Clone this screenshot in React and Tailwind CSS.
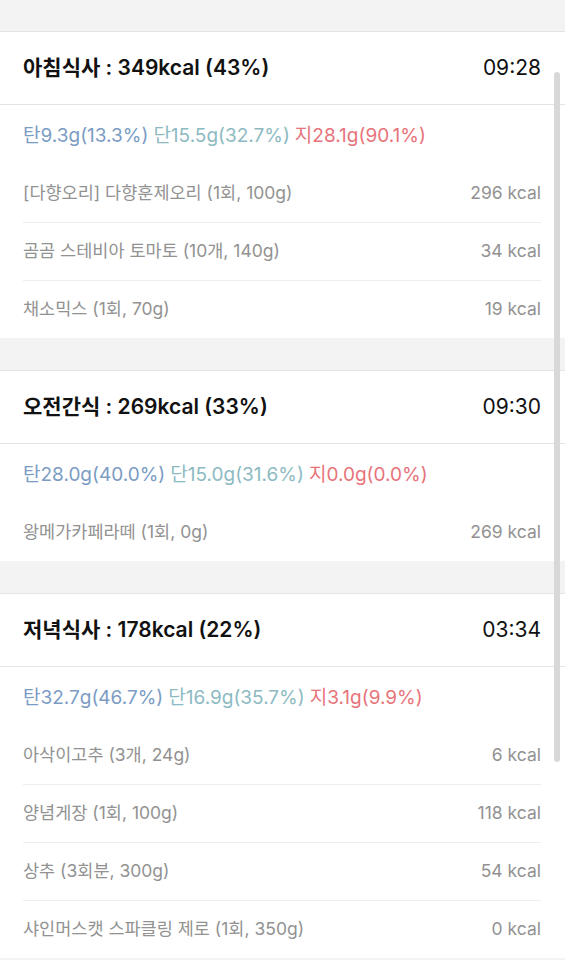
const meals = [
  {
    title: '아침식사 : 349kcal (43%)',
    time: '09:28',
    carb: '탄9.3g(13.3%)',
    protein: '단15.5g(32.7%)',
    fat: '지28.1g(90.1%)',
    items: [
      { name: '[다향오리] 다향훈제오리 (1회, 100g)', kcal: '296 kcal' },
      { name: '곰곰 스테비아 토마토 (10개, 140g)', kcal: '34 kcal' },
      { name: '채소믹스 (1회, 70g)', kcal: '19 kcal' },
    ],
  },
  {
    title: '오전간식 : 269kcal (33%)',
    time: '09:30',
    carb: '탄28.0g(40.0%)',
    protein: '단15.0g(31.6%)',
    fat: '지0.0g(0.0%)',
    items: [{ name: '왕메가카페라떼 (1회, 0g)', kcal: '269 kcal' }],
  },
  {
    title: '저녁식사 : 178kcal (22%)',
    time: '03:34',
    carb: '탄32.7g(46.7%)',
    protein: '단16.9g(35.7%)',
    fat: '지3.1g(9.9%)',
    items: [
      { name: '아삭이고추 (3개, 24g)', kcal: '6 kcal' },
      { name: '양념게장 (1회, 100g)', kcal: '118 kcal' },
      { name: '상추 (3회분, 300g)', kcal: '54 kcal' },
      { name: '샤인머스캣 스파클링 제로 (1회, 350g)', kcal: '0 kcal' },
    ],
  },
];

const MealSection = ({ meal }) => (
  <section className="bg-white">
    {/* Header */}
    <div className="h-[74px] border-y border-[#e4e4e4] flex items-center justify-between pl-[23px] pr-6">
      <h3 className="text-[21px] font-semibold text-[#111]">{meal.title}</h3>
      <span className="text-[21px] text-[#111]">{meal.time}</span>
    </div>

    {/* Macros */}
    <div className="h-[60px] flex items-center pt-[3px] pl-[23px] pr-6 text-[19px]">
      <span className="text-[#7b9cc4]">{meal.carb}</span>
      <span className="text-[#8dbac2] ml-[5px]">{meal.protein}</span>
      <span className="text-[#e7737b] ml-[5px]">{meal.fat}</span>
    </div>

    {/* Foods */}
    <ul className="pl-[23px] pr-6">
      {meal.items.map((item, i) => (
        <li
          key={item.name}
          className={`h-[57px] flex items-center justify-between text-[17.5px] text-[#929292] ${
            i < meal.items.length - 1 ? 'box-content border-b border-[#ededed]' : ''
          }`}
        >
          <span>{item.name}</span>
          <span>{item.kcal}</span>
        </li>
      ))}
    </ul>
  </section>
);

const App = () => {
  return (
    <div
      className="relative min-h-screen bg-[#f3f3f3] pt-[31px] space-y-8 overflow-hidden"
      style={{ fontFamily: 'Inter, "Noto Sans CJK KR", sans-serif' }}
    >
      {meals.map((meal) => (
        <MealSection key={meal.title} meal={meal} />
      ))}

      {/* scroll indicator */}
      <div className="absolute right-[5px] top-[72px] w-[6px] h-[690px] rounded-full bg-[#d8d8d8]" />
    </div>
  );
};

export default App;
